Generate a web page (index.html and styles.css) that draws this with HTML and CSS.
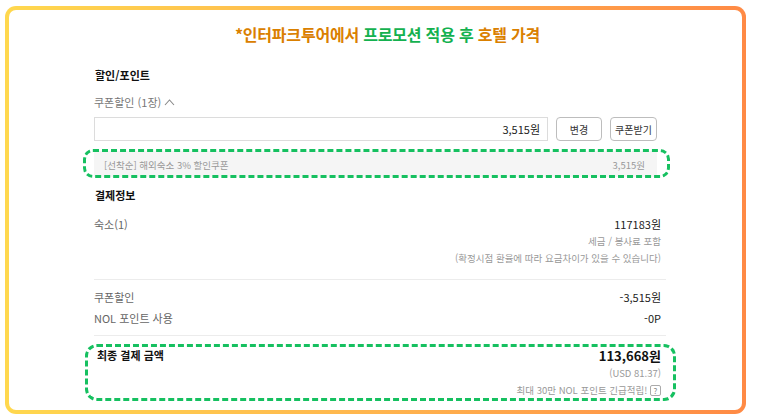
FILE: index.html
```html
<!DOCTYPE html>
<html lang="ko">
<head>
<meta charset="utf-8">
<link rel="stylesheet" href="styles.css">
</head>
<body>
<div class="frame">
  <h1 class="title">*인터파크투어에서 <span class="green">프로모션 적용 후</span> 호텔 가격</h1>

  <div class="section-title">할인/포인트</div>
  <div class="toggle">쿠폰할인 (1장) <svg class="chev" width="11" height="8" viewBox="0 0 11 8"><path d="M1 7 L5.5 2 L10 7" fill="none" stroke="#888" stroke-width="1.1"/></svg></div>

  <div class="coupon-row">
    <div class="coupon-input">3,515원</div>
    <button class="btn">변경</button>
    <button class="btn">쿠폰받기</button>
  </div>

  <div class="coupon-item mark">
    <span>[선착순] 해외숙소 3% 할인쿠폰</span>
    <span>3,515원</span>
  </div>

  <div class="section-title pay-title">결제정보</div>
  <div class="row first">
    <span class="label">숙소(1)</span>
    <span class="amount">117183원</span>
  </div>
  <div class="note">세금 / 봉사료 포함</div>
  <div class="note">(확정시점 환율에 따라 요금차이가 있을 수 있습니다)</div>

  <div class="divider"></div>

  <div class="row r-coupon">
    <span class="label">쿠폰할인</span>
    <span class="amount">-3,515원</span>
  </div>
  <div class="row r-point">
    <span class="label">NOL 포인트 사용</span>
    <span class="amount">-0P</span>
  </div>

  <div class="divider d2"></div>

  <div class="final mark2">
    <div class="final-top">
      <span class="final-label">최종 결제 금액</span>
      <span class="final-amount">113,668원</span>
    </div>
    <div class="final-note">(USD 81.37)</div>
    <div class="final-note">최대 30만 NOL 포인트 긴급적립! <span class="q">?</span></div>
  </div>
</div>
</body>
</html>
```

FILE: styles.css
```css
* { box-sizing: border-box; }
html, body { margin: 0; padding: 0; background: #fff; }
body {
  font-family: "Noto Sans CJK KR", "Noto Sans", sans-serif;
  color: #333;
  width: 760px;
  height: 420px;
  overflow: hidden;
}
.frame {
  margin: 6px 0 0 5px;
  width: 741px;
  height: 408px;
  border: 4px solid transparent;
  border-radius: 11px;
  background:
    linear-gradient(#fff, #fff) padding-box,
    linear-gradient(90deg, #ffd84e 0%, #ffb54e 50%, #ff8a45 100%) border-box;
  padding: 14px 76px 0 85px;
  display: flex;
  flex-direction: column;
}
.title {
  margin: 0;
  padding-left: 15px;
  text-align: center;
  font-size: 16px;
  line-height: 20px;
  font-weight: 700;
  color: #da8000;
  letter-spacing: -0.2px;
}
.green { color: #14b14f; }
.section-title {
  margin-top: 23px;
  font-size: 11px;
  line-height: 16px;
  font-weight: 700;
  color: #111;
  padding-left: 1px;
}
.toggle {
  margin-top: 11px;
  font-size: 11px;
  line-height: 16px;
  color: #777;
  display: flex;
  align-items: center;
  gap: 3px;
}
.chev { margin-top: -1px; }
.coupon-row {
  margin-top: 7px;
  width: 563px;
  display: flex;
  gap: 8px;
  height: 24px;
}
.coupon-input {
  flex: 1;
  border: 1px solid #dcdcdc;
  font-size: 11px;
  line-height: 22px;
  text-align: right;
  padding-right: 7px;
  color: #222;
}
.btn {
  font-family: inherit;
  background: #fff;
  border: 1px solid #bdbdbd;
  border-radius: 4px;
  font-size: 10px;
  color: #333;
  padding: 0;
  height: 24px;
  width: 46px;
}
.btn + .btn { width: 47px; }
.coupon-item {
  margin-top: 10px;
  width: 563px;
  height: 26px;
  background: #f5f5f5;
  display: flex;
  justify-content: space-between;
  align-items: center;
  padding: 2px 12px 0 10px;
  font-size: 9.5px;
  color: #999;
}
.mark { position: relative; }
.mark::after {
  content: "";
  position: absolute;
  left: -11px;
  right: -13px;
  top: -2px;
  bottom: -1px;
  border: 3px dashed #16c060;
  border-radius: 10px;
}
.pay-title { margin-top: 10px; }
.row {
  display: flex;
  justify-content: space-between;
  font-size: 11px;
  line-height: 17px;
  padding-right: 5px;
}
.row.first { margin-top: 13px; }
.label { color: #666; }
.amount { color: #222; }
.note {
  text-align: right;
  font-size: 9.5px;
  line-height: 17px;
  color: #999;
  padding-right: 5px;
}
.divider {
  margin-top: 12px;
  height: 1px;
  background: #ececec;
}
.r-coupon { margin-top: 9px; }
.r-point { margin-top: 4px; }
.d2 { margin-top: 8px; }
.final {
  margin-top: 11px;
  padding-right: 5px;
}
.mark2 { position: relative; }
.mark2::after {
  content: "";
  position: absolute;
  left: -9px;
  right: -10px;
  top: -3px;
  bottom: -2px;
  border: 3px dashed #16c060;
  border-radius: 12px;
}
.final-top {
  display: flex;
  justify-content: space-between;
  align-items: flex-start;
  line-height: 18px;
}
.final-label {
  font-size: 11px;
  font-weight: 700;
  color: #111;
  padding-left: 3px;
  line-height: 16px;
}
.final-amount {
  font-size: 13px;
  font-weight: 700;
  color: #111;
}
.final-note {
  text-align: right;
  font-size: 9.5px;
  line-height: 17px;
  color: #999;
}
.q {
  display: inline-block;
  width: 11px;
  height: 11px;
  border: 1px solid #aaa;
  border-radius: 2px;
  font-size: 8px;
  line-height: 9px;
  text-align: center;
  color: #888;
  vertical-align: middle;
  margin-top: -2px;
}
```
